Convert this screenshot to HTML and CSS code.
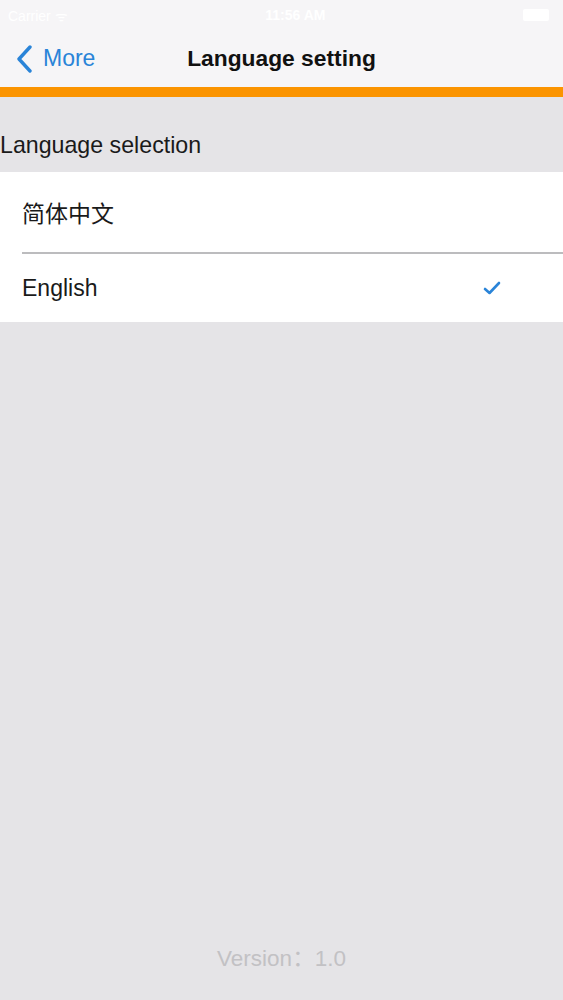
FILE: index.html
```html
<!DOCTYPE html>
<html>
<head>
<meta charset="utf-8">
<link rel="stylesheet" href="styles.css">
</head>
<body>
<div class="screen">
  <div class="status">
    <span class="carrier">Carrier ᯤ</span>
    <span class="time">11:56 AM</span>
    <span class="battery"></span>
  </div>
  <div class="nav">
    <div class="back">
      <svg class="chev" width="18" height="28" viewBox="0 0 18 28"><path d="M14 2 L3 14 L14 26" fill="none" stroke="#2a84d8" stroke-width="3.4" stroke-linecap="round" stroke-linejoin="round"/></svg>
      <span>More</span>
    </div>
    <div class="title">Language setting</div>
  </div>
  <div class="accent"></div>
  <div class="content">
    <div class="section">Language selection</div>
    <div class="list">
      <div class="row">简体中文</div>
      <div class="sep"></div>
      <div class="row">English
        <svg class="check" width="18" height="14" viewBox="0 0 18 14"><path d="M2 8 L6.5 12 L16 2" fill="none" stroke="#2a84d8" stroke-width="2.6" stroke-linecap="round" stroke-linejoin="round"/></svg>
      </div>
    </div>
    <div class="spacer"></div>
    <div class="version">Version：1.0</div>
  </div>
</div>
</body>
</html>
```
FILE: styles.css
```css
html, body { margin: 0; padding: 0; }
body { font-family: "Liberation Sans", "Noto Sans CJK SC", sans-serif; }
.screen { width: 563px; height: 1000px; display: flex; flex-direction: column; background: #e5e4e7; }
.status { height: 30px; background: #f6f5f7; display: flex; align-items: center; justify-content: space-between; padding: 0 14px 0 8px; color: #ffffff; font-size: 14px; }
.time { font-weight: bold; }
.battery { width: 26px; height: 12px; background: #fff; border-radius: 2px; }
.nav { height: 57px; background: #f6f5f7; display: flex; align-items: center; position: relative; }
.back { display: flex; align-items: center; gap: 9px; padding-left: 16px; color: #2a84d8; font-size: 23px; }
.title { position: absolute; left: 0; right: 0; text-align: center; font-size: 22.8px; font-weight: bold; color: #111; pointer-events: none; }
.accent { height: 10px; background: #fb9400; }
.content { flex: 1; display: flex; flex-direction: column; }
.section { height: 75px; display: flex; align-items: center; padding-top: 21px; box-sizing: border-box; font-size: 23.2px; color: #1a1a1a; }
.list { background: #fff; }
.row { display: flex; align-items: center; justify-content: space-between; padding: 0 62px 0 22px; font-size: 23px; color: #1a1a1a; }
.row:first-child { height: 80px; }
.row:last-child { height: 68px; }
.sep { height: 2px; margin-left: 22px; background: #bcbcbe; }
.spacer { flex: 1; }
.version { text-align: center; font-size: 22.5px; color: #c2c1c4; padding-bottom: 28px; }
```
